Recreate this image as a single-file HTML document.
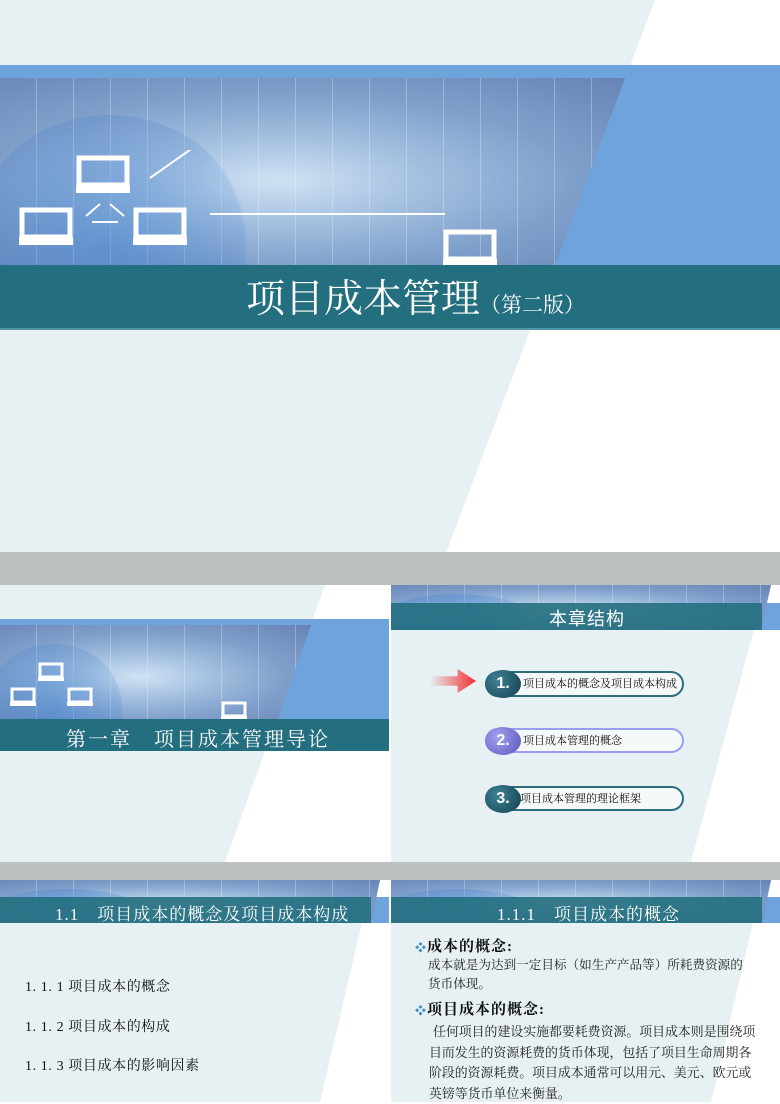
<!DOCTYPE html>
<html><head><meta charset="utf-8">
<style>
*{margin:0;padding:0;box-sizing:border-box}
body{width:780px;height:1102px;position:relative;overflow:hidden;background:#fff;font-family:"Liberation Serif","Noto Serif CJK SC",serif}
.abs{position:absolute}
.map{position:absolute;overflow:hidden;
background:
repeating-linear-gradient(90deg,rgba(255,255,255,0) 0 36px,rgba(240,245,255,.3) 36px 37px),
radial-gradient(ellipse at 45% 55%,#d0e2f4 0%,#a3bfdf 30%,#7f9fcb 60%,#6683b4 100%);}
.map:before{content:"";position:absolute;left:-5%;top:20%;width:45%;height:140%;border-radius:50%;background:radial-gradient(circle,rgba(60,130,210,.45),rgba(40,110,200,.15) 70%,transparent 72%)}
.teal{position:absolute;background:#236f80;color:#fff;text-align:center}
.blue{position:absolute;background:#6fa3dc}
.gray{position:absolute;background:#bcc0c0;left:0;width:780px}
.bg{position:absolute;background:#e7f0f3}
.pc{position:absolute}
.pill{position:absolute;border:2px solid #2b6e7f;border-radius:14px;background:#f5f9fa;font-size:11px;color:#111;padding-left:36px;line-height:22px}
.num{position:absolute;left:-2px;top:-3px;width:36px;height:28px;border-radius:50%;color:#fff;font-family:"Liberation Sans",sans-serif;font-weight:bold;font-size:16px;line-height:28px;text-align:center}
</style></head><body>
<!-- top slide -->
<div class="bg" style="left:0;top:0;width:780px;height:553px;clip-path:polygon(0 0,655px 0,446px 553px,0 553px)"></div>
<div class="blue" style="left:0;top:65px;width:780px;height:200px"></div>
<div class="map" style="left:0;top:78px;width:625px;height:187px;clip-path:polygon(0 0,625px 0,555px 187px,0 187px)"></div>
<svg class="pc" style="left:0;top:150px" width="520" height="120" viewBox="0 0 520 120">
<g fill="white" stroke="white">
<rect x="79" y="8" width="48" height="27" fill="none" stroke-width="5"/><rect x="76" y="35" width="54" height="8" stroke="none"/>
<rect x="22" y="60" width="48" height="27" fill="none" stroke-width="5"/><rect x="19" y="87" width="54" height="8" stroke="none"/>
<rect x="136" y="60" width="48" height="27" fill="none" stroke-width="5"/><rect x="133" y="87" width="54" height="8" stroke="none"/>
<rect x="446" y="82" width="48" height="27" fill="none" stroke-width="5"/><rect x="443" y="109" width="54" height="11" stroke="none"/>
<path d="M92 72 L118 72 M100 54 L86 66 M110 54 L124 66 M150 28 L275 -60 M210 64 L445 64" stroke-width="2" fill="none"/>
</g></svg>
<div class="teal" style="left:0;top:265px;width:780px;height:65px;border-bottom:2px solid #4e96a8"></div>
<div class="abs" style="left:246px;top:276px;color:#fff;font-size:39px;white-space:nowrap;line-height:48px">项目成本管理<span style="font-size:21px">（第二版）</span></div>
<div class="gray" style="top:552px;height:33px"></div>

<!-- middle left -->
<div class="bg" style="left:0;top:585px;width:389px;height:277px;clip-path:polygon(0 0,325px 0,225px 277px,0 277px)"></div>
<div class="blue" style="left:0;top:619px;width:389px;height:100px"></div>
<div class="map" style="left:0;top:625px;width:311px;height:94px;clip-path:polygon(0 0,311px 0,278px 94px,0 94px)"></div>
<svg class="pc" style="left:0;top:660px" width="260" height="60" viewBox="0 0 260 60">
<g fill="white" stroke="white">
<rect x="40" y="4" width="22" height="13" fill="none" stroke-width="3"/><rect x="38" y="17" width="26" height="4" stroke="none"/>
<rect x="12" y="29" width="22" height="13" fill="none" stroke-width="3"/><rect x="10" y="42" width="26" height="4" stroke="none"/>
<rect x="69" y="29" width="22" height="13" fill="none" stroke-width="3"/><rect x="67" y="42" width="26" height="4" stroke="none"/>
<rect x="223" y="43" width="22" height="13" fill="none" stroke-width="3"/><rect x="221" y="56" width="26" height="4" stroke="none"/>
</g></svg>
<div class="teal" style="left:0;top:719px;width:389px;height:32px"></div>
<div class="abs" style="left:66px;top:723px;color:#fff;font-size:20px;white-space:nowrap;letter-spacing:2px">第一章　项目成本管理导论</div>

<!-- middle right -->
<div class="bg" style="left:391px;top:585px;width:389px;height:277px;clip-path:polygon(0 0,375px 0,300px 277px,0 277px)"></div>
<div class="blue" style="left:391px;top:603px;width:389px;height:27px"></div>
<div class="map" style="left:391px;top:585px;width:380px;height:45px;clip-path:polygon(0 0,380px 0,370px 45px,0 45px)"></div>
<div class="teal" style="left:391px;top:603px;width:371px;height:27px;background:rgba(35,111,128,.9)"></div>
<div class="abs" style="left:549px;top:605px;color:#fff;font-size:18px;font-family:'Liberation Sans','Noto Sans CJK SC',sans-serif;letter-spacing:1px">本章结构</div>
<div class="abs" style="left:430px;top:669px;width:46px;height:24px;background:linear-gradient(90deg,rgba(255,80,80,0),#f03030);clip-path:polygon(0 30%,60% 30%,60% 0,100% 50%,60% 100%,60% 70%,0 70%)"></div>
<div class="pill" style="left:485px;top:671px;width:199px;height:26px">项目成本的概念及项目成本构成<div class="num" style="background:radial-gradient(circle at 35% 35%,#3d8294,#133e4d)">1.</div></div>
<div class="pill" style="left:485px;top:728px;width:199px;height:25px;border-color:#9a9df2">项目成本管理的概念<div class="num" style="background:radial-gradient(circle at 35% 35%,#a3a0f0,#5a55b8)">2.</div></div>
<div class="pill" style="left:485px;top:786px;width:199px;height:25px;padding-left:33px">项目成本管理的理论框架<div class="num" style="background:radial-gradient(circle at 35% 35%,#3d8294,#133e4d)">3.</div></div>

<div class="gray" style="top:862px;height:18px"></div>

<!-- bottom left -->
<div class="bg" style="left:0;top:880px;width:389px;height:222px;clip-path:polygon(0 0,372px 0,320px 222px,0 222px)"></div>
<div class="blue" style="left:0;top:897px;width:389px;height:26px"></div>
<div class="map" style="left:0;top:880px;width:380px;height:43px;clip-path:polygon(0 0,380px 0,371px 43px,0 43px)"></div>
<div class="teal" style="left:0;top:897px;width:371px;height:26px;background:rgba(35,111,128,.9)"></div>
<div class="abs" style="left:55px;top:900px;color:#fff;font-size:17px;white-space:nowrap;letter-spacing:1px">1.1　项目成本的概念及项目成本构成</div>
<div class="abs" style="left:25px;top:968px;font-size:14px;color:#111;line-height:39.5px;white-space:nowrap;letter-spacing:0.6px">1. 1. 1 项目成本的概念<br>1. 1. 2 项目成本的构成<br>1. 1. 3 项目成本的影响因素</div>

<!-- bottom right -->
<div class="bg" style="left:391px;top:880px;width:389px;height:222px;clip-path:polygon(0 0,372px 0,320px 222px,0 222px)"></div>
<div class="blue" style="left:391px;top:897px;width:389px;height:26px"></div>
<div class="map" style="left:391px;top:880px;width:380px;height:43px;clip-path:polygon(0 0,380px 0,371px 43px,0 43px)"></div>
<div class="teal" style="left:391px;top:897px;width:371px;height:26px;background:rgba(35,111,128,.9)"></div>
<div class="abs" style="left:497px;top:900px;color:#fff;font-size:17px;white-space:nowrap;letter-spacing:1px">1.1.1　项目成本的概念</div>
<div class="abs" style="left:415px;top:935px;font-size:15px;font-weight:bold;color:#111;letter-spacing:1px"><span style="color:#3a8cc0;font-size:11px">❖</span>成本的概念:</div>
<div class="abs" style="left:428px;top:956px;font-size:12.6px;line-height:19px;color:#222;white-space:nowrap">成本就是为达到一定目标（如生产产品等）所耗费资源的<br>货币体现。</div>
<div class="abs" style="left:415px;top:998px;font-size:15px;font-weight:bold;color:#111;letter-spacing:1px"><span style="color:#3a8cc0;font-size:11px">❖</span>项目成本的概念:</div>
<div class="abs" style="left:429px;top:1022px;width:333px;font-size:12.9px;line-height:20.5px;color:#222;text-indent:4px">任何项目的建设实施都要耗费资源。项目成本则是围绕项目而发生的资源耗费的货币体现，包括了项目生命周期各阶段的资源耗费。项目成本通常可以用元、美元、欧元或英镑等货币单位来衡量。</div>
</body></html>
